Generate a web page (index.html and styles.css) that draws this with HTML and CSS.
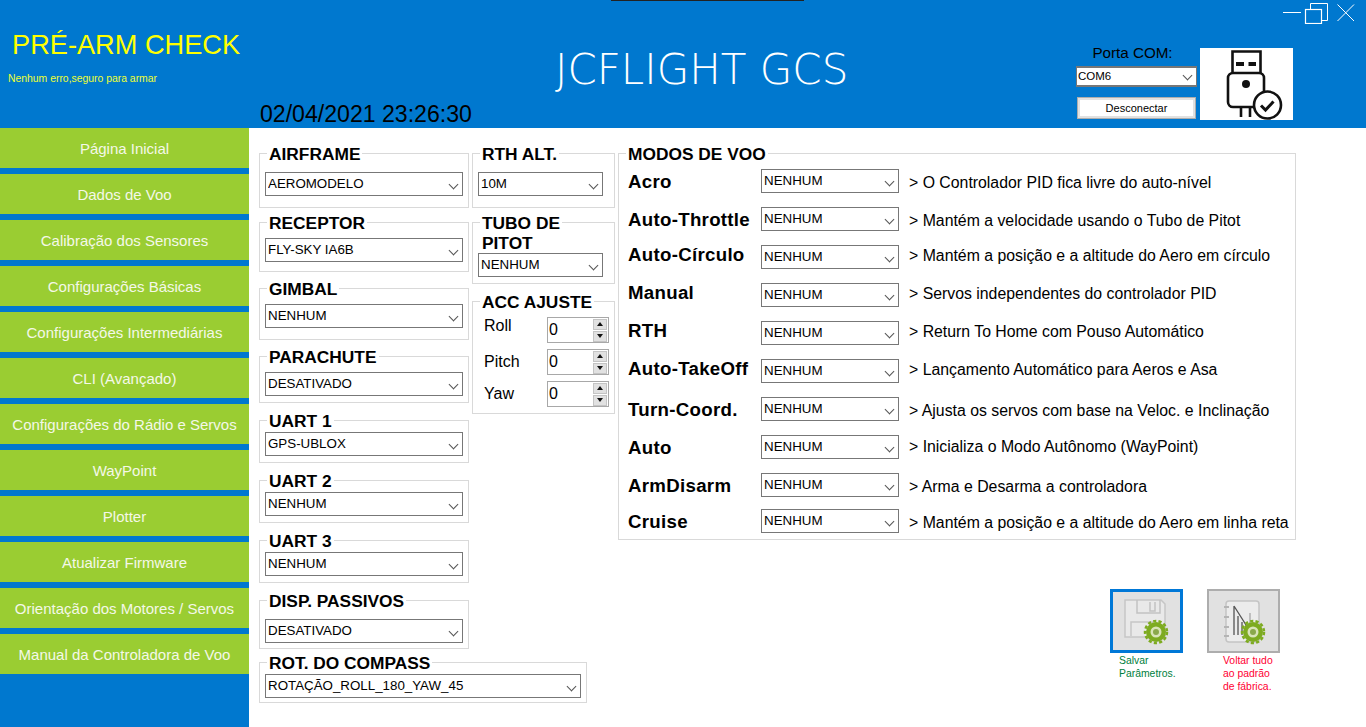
FILE: index.html
```html
<!DOCTYPE html>
<html lang="pt-BR">

<head>
	<meta charset="UTF-8">
	<title>JCFLIGHT GCS</title>
	<link rel="stylesheet" href="styles.css">
</head>

<body>
	<div class="topStrip"></div>
	<header class="header">
		<div class="status">
			<div class="statusTitle">PRÉ-ARM CHECK</div>
			<div class="statusText">Nenhum erro,seguro para armar</div>
		</div>
		<div class="clock">02/04/2021 23:26:30</div>
		<div class="appTitle">JCFLIGHT GCS</div>
		<div class="headerRight">
			<svg class="winControls" width="73" height="24" viewBox="0 0 73 24" fill="none" stroke="#fff" stroke-width="1">
				<path d="M0 12.5H18" />
				<path d="M27.5 9V3.5H44.5V20.5H39" />
				<rect x="22.5" y="9.5" width="16" height="14" stroke-width="1.2" />
				<path d="M54.5 4.5L71 21M71 4.5L54.5 21" />
			</svg>
			<div class="comRow">
				<div class="comControls">
					<div class="comLabel">Porta COM:</div>
					<div class="combo comCombo"><select><option>COM6</option></select></div>
					<button class="connectButton">Desconectar</button>
				</div>
				<div class="usbBox">
					<svg width="93" height="72" viewBox="0 0 93 72" fill="none" stroke="#111" stroke-width="2.6">
						<path d="M32.5 25V3.5H60.5V25" />
						<rect x="28" y="25" width="36" height="34" rx="5" />
						<path d="M36 16H44M48.5 16H56" stroke-width="4" />
						<circle cx="46" cy="36" r="4" fill="#111" stroke="none" />
						<path d="M41 59V69M50 59V69" />
						<circle cx="67.5" cy="57" r="13.5" fill="#fff" />
						<path d="M61 57.5L65.5 62L73.5 53.5" stroke-width="3" />
					</svg>
				</div>
			</div>
		</div>
	</header>

	<div class="page">
		<nav class="sidebar">
			<button class="navButton">Página Inicial</button>
			<button class="navButton">Dados de Voo</button>
			<button class="navButton">Calibração dos Sensores</button>
			<button class="navButton">Configurações Básicas</button>
			<button class="navButton">Configurações Intermediárias</button>
			<button class="navButton">CLI (Avançado)</button>
			<button class="navButton">Configurações do Rádio e Servos</button>
			<button class="navButton">WayPoint</button>
			<button class="navButton">Plotter</button>
			<button class="navButton">Atualizar Firmware</button>
			<button class="navButton">Orientação dos Motores / Servos</button>
			<button class="navButton">Manual da Controladora de Voo</button>
		</nav>

		<main class="content">
			<div class="leftBlock">
				<div class="leftColumns">
					<div class="colLeft">
						<section class="group airframe">
							<div class="groupTitle">AIRFRAME</div>
							<div class="combo"><select><option>AEROMODELO</option></select></div>
						</section>
						<section class="group receptor">
							<div class="groupTitle">RECEPTOR</div>
							<div class="combo"><select><option>FLY-SKY IA6B</option></select></div>
						</section>
						<section class="group gimbal">
							<div class="groupTitle">GIMBAL</div>
							<div class="combo"><select><option>NENHUM</option></select></div>
						</section>
						<section class="group parachute">
							<div class="groupTitle">PARACHUTE</div>
							<div class="combo"><select><option>DESATIVADO</option></select></div>
						</section>
						<section class="group uart">
							<div class="groupTitle">UART 1</div>
							<div class="combo"><select><option>GPS-UBLOX</option></select></div>
						</section>
						<section class="group uart">
							<div class="groupTitle">UART 2</div>
							<div class="combo"><select><option>NENHUM</option></select></div>
						</section>
						<section class="group uart">
							<div class="groupTitle">UART 3</div>
							<div class="combo"><select><option>NENHUM</option></select></div>
						</section>
						<section class="group passive">
							<div class="groupTitle">DISP. PASSIVOS</div>
							<div class="combo"><select><option>DESATIVADO</option></select></div>
						</section>
					</div>
					<div class="colMid">
						<section class="group rthAlt">
							<div class="groupTitle">RTH ALT.</div>
							<div class="combo"><select><option>10M</option></select></div>
						</section>
						<section class="group pitot">
							<div class="groupTitle">TUBO DE<br>PITOT</div>
							<div class="combo"><select><option>NENHUM</option></select></div>
						</section>
						<section class="group acc">
							<div class="groupTitle">ACC AJUSTE</div>
							<div class="accRow rollRow">
								<label>Roll</label>
								<div class="spin"><input type="text" value="0"><div class="spinButtons"><span class="spinUp"></span><span class="spinDown"></span></div></div>
							</div>
							<div class="accRow">
								<label>Pitch</label>
								<div class="spin"><input type="text" value="0"><div class="spinButtons"><span class="spinUp"></span><span class="spinDown"></span></div></div>
							</div>
							<div class="accRow">
								<label>Yaw</label>
								<div class="spin"><input type="text" value="0"><div class="spinButtons"><span class="spinUp"></span><span class="spinDown"></span></div></div>
							</div>
						</section>
					</div>
				</div>
				<section class="group compass">
					<div class="groupTitle">ROT. DO COMPASS</div>
					<div class="combo"><select><option>ROTAÇÃO_ROLL_180_YAW_45</option></select></div>
				</section>
			</div>

			<div class="rightBlock">
				<section class="group modes">
					<div class="groupTitle">MODOS DE VOO</div>
					<div class="modeList">
						<div class="modeRow"><div class="modeName">Acro</div><div class="combo"><select><option>NENHUM</option></select></div><div class="modeDesc">&gt; O Controlador PID fica livre do auto-nível</div></div>
						<div class="modeRow"><div class="modeName">Auto-Throttle</div><div class="combo"><select><option>NENHUM</option></select></div><div class="modeDesc">&gt; Mantém a velocidade usando o Tubo de Pitot</div></div>
						<div class="modeRow raised"><div class="modeName">Auto-Círculo</div><div class="combo"><select><option>NENHUM</option></select></div><div class="modeDesc">&gt; Mantém a posição e a altitude do Aero em círculo</div></div>
						<div class="modeRow raised"><div class="modeName">Manual</div><div class="combo"><select><option>NENHUM</option></select></div><div class="modeDesc">&gt; Servos independentes do controlador PID</div></div>
						<div class="modeRow raised"><div class="modeName">RTH</div><div class="combo"><select><option>NENHUM</option></select></div><div class="modeDesc">&gt; Return To Home com Pouso Automático</div></div>
						<div class="modeRow raised"><div class="modeName">Auto-TakeOff</div><div class="combo"><select><option>NENHUM</option></select></div><div class="modeDesc">&gt; Lançamento Automático para Aeros e Asa</div></div>
						<div class="modeRow"><div class="modeName">Turn-Coord.</div><div class="combo"><select><option>NENHUM</option></select></div><div class="modeDesc">&gt; Ajusta os servos com base na Veloc. e Inclinação</div></div>
						<div class="modeRow highDesc"><div class="modeName">Auto</div><div class="combo"><select><option>NENHUM</option></select></div><div class="modeDesc">&gt; Inicializa o Modo Autônomo (WayPoint)</div></div>
						<div class="modeRow"><div class="modeName">ArmDisarm</div><div class="combo"><select><option>NENHUM</option></select></div><div class="modeDesc">&gt; Arma e Desarma a controladora</div></div>
						<div class="modeRow lastMode"><div class="modeName">Cruise</div><div class="combo"><select><option>NENHUM</option></select></div><div class="modeDesc">&gt; Mantém a posição e a altitude do Aero em linha reta</div></div>
					</div>
				</section>

				<div class="actions">
					<div class="action">
						<button class="actionButton activeAction">
							<svg width="67" height="58" viewBox="0 0 67 58">
								<path d="M12 8H48L52 12V45H12Z" fill="#e9e9e9" stroke="#c6c6c6" stroke-width="1.5" />
								<path d="M24 8V21H47V8M37 10V19H42V10" fill="none" stroke="#c2c2c2" stroke-width="1.5" />
								<path d="M18 44V30H40" fill="none" stroke="#c6c6c6" stroke-width="1.5" />
								<circle cx="43" cy="40" r="11" fill="none" stroke="#7dab20" stroke-width="2.5" stroke-dasharray="3.2 2.2" />
								<circle cx="43" cy="40" r="10" fill="#7dab20" />
								<circle cx="43" cy="40" r="5.5" fill="#d9e4b8" />
								<circle cx="43" cy="40" r="3" fill="#8aa84a" />
							</svg>
						</button>
						<div class="actionText saveText">Salvar<br>Parâmetros.</div>
					</div>
					<div class="action resetAction">
						<button class="actionButton">
							<svg width="69" height="60" viewBox="0 0 69 60">
								<rect x="17" y="10" width="33" height="41" rx="3" fill="#ececec" stroke="#c4c4c4" stroke-width="1.5" />
								<path d="M15 16H20M15 26H20M15 36H20M15 45H20" stroke="#b4b4b4" stroke-width="2" />
								<path d="M25 15L37 34V42M25 15V44M29 25V44M33 31V44" fill="none" stroke="#555" stroke-width="1.3" />
								<path d="M41 22V32" stroke="#b0b0b0" stroke-width="1.5" />
								<circle cx="44" cy="41" r="11" fill="none" stroke="#7dab20" stroke-width="2.5" stroke-dasharray="3.2 2.2" />
								<circle cx="44" cy="41" r="10" fill="#7dab20" />
								<circle cx="44" cy="41" r="5.5" fill="#d9e4b8" />
								<circle cx="44" cy="41" r="3" fill="#8aa84a" />
							</svg>
						</button>
						<div class="actionText resetText">Voltar tudo<br>ao padrão<br>de fábrica.</div>
					</div>
				</div>
			</div>
		</main>
	</div>
</body>

</html>
```

FILE: styles.css
```css
* {
	box-sizing: border-box;
}

html,
body {
	margin: 0;
	height: 727px;
	overflow: hidden;
}

body {
	font-family: "Liberation Sans", Arial, sans-serif;
	color: #000;
	background-color: #fff;
	position: relative;
}

.topStrip {
	position: absolute;
	top: 0;
	left: 611px;
	width: 193px;
	height: 1px;
	background-color: #222;
}

/* header */
.header {
	display: flex;
	height: 128px;
	background-color: #0078CF;
}

.status {
	width: 259px;
	padding: 29px 0 0 12px;
}

.statusTitle {
	font-size: 27.2px;
	line-height: 32px;
	color: #FFFF00;
	white-space: nowrap;
}

.statusText {
	margin: 11px 0 0 -4px;
	font-size: 10.4px;
	line-height: 14px;
	color: #EEFF33;
	white-space: nowrap;
}

.clock {
	width: 296px;
	align-self: flex-end;
	padding: 0 0 0 1px;
	font-size: 23.1px;
	line-height: 28px;
	white-space: nowrap;
}

.appTitle {
	width: 521px;
	padding-top: 46px;
	font-family: "DejaVu Sans", sans-serif;
	font-weight: 200;
	font-size: 42px;
	line-height: 48px;
	color: #fff;
	white-space: nowrap;
}

.headerRight {
	flex: 1;
}

.winControls {
	display: block;
	margin-left: 207px;
}

.comRow {
	display: flex;
	margin-top: 24px;
}

.comControls {
	width: 121px;
}

.comLabel {
	margin-top: -4px;
	height: 22px;
	padding-right: 8px;
	font-size: 15.2px;
	line-height: 18px;
	text-align: center;
}

.combo {
	position: relative;
	height: 24px;
}

.combo select {
	display: block;
	width: 100%;
	height: 100%;
	padding: 0 20px 2px 2px;
	appearance: none;
	border: 1px solid #777;
	border-radius: 0;
	background-color: #fff;
	color: #000;
	font-family: "Liberation Sans", Arial, sans-serif;
	font-size: 13.33px;
}

.combo::after {
	content: "";
	position: absolute;
	top: 9px;
	right: 6px;
	width: 6px;
	height: 6px;
	border-right: 1px solid #555;
	border-bottom: 1px solid #555;
	transform: rotate(45deg);
	pointer-events: none;
}

.comCombo {
	height: 21px;
}

.comCombo select {
	border-width: 2px 1px;
	padding-left: 1px;
	font-size: 11.5px;
}

.comCombo::after {
	top: 6px;
}

.connectButton {
	display: block;
	width: 119px;
	height: 22px;
	margin: 10px 0 0 1px;
	padding: 0;
	border: 1px solid #adadad;
	outline: 2px solid #e1e1e1;
	outline-offset: -3px;
	background-color: #fff;
	font-family: "Liberation Sans", Arial, sans-serif;
	font-size: 11px;
	color: #000;
}

.usbBox {
	width: 93px;
	height: 72px;
	margin-left: 3px;
	background-color: #fff;
}

.usbBox svg {
	display: block;
}

/* sidebar */
.page {
	display: flex;
	height: 599px;
}

.sidebar {
	display: flex;
	flex-direction: column;
	gap: 6px;
	width: 249px;
	background-color: #0078CF;
}

.navButton {
	height: 40px;
	padding: 1px 0 0;
	border: none;
	background-color: #9ACD32;
	color: #F4F8E8;
	font-family: "Liberation Sans", Arial, sans-serif;
	font-size: 15px;
	white-space: nowrap;
}

/* content */
.content {
	display: flex;
	flex: 1;
	gap: 3px;
	padding: 25px 0 0 10px;
}

.leftColumns {
	display: flex;
	gap: 3px;
}

.colLeft {
	width: 210px;
}

.colMid {
	width: 143px;
}

.group {
	border: 1px solid #d9d9d9;
	padding: 0 5px;
}

.groupTitle {
	width: fit-content;
	margin: -10px 0 0 2px;
	padding: 0 2px;
	background-color: #fff;
	font-size: 17.33px;
	font-weight: bold;
	line-height: 20px;
	white-space: nowrap;
}

.airframe {
	padding-bottom: 11px;
}

.airframe .combo,
.passive .combo,
.rthAlt .combo {
	margin-top: 8px;
}

.receptor {
	margin-top: 14px;
	padding-bottom: 9px;
}

.gimbal {
	margin-top: 16px;
	padding-bottom: 11px;
}

.parachute {
	margin-top: 16px;
	padding-bottom: 6px;
}

.receptor .combo,
.gimbal .combo,
.parachute .combo {
	margin-top: 5px;
}

.uart {
	margin-top: 17px;
	padding-bottom: 6px;
}

.uart .combo,
.compass .combo {
	margin-top: 1px;
}

.passive {
	margin-top: 17px;
	padding-bottom: 5px;
}

.compass {
	width: 328px;
	margin-top: 13px;
	padding-bottom: 4px;
}

.colMid .group {
	padding-right: 11px;
}

.rthAlt {
	padding-bottom: 11px;
}

.pitot {
	margin-top: 14px;
	padding-bottom: 6px;
}

.acc {
	margin-top: 17px;
	padding-bottom: 6px;
}

.accRow {
	display: grid;
	grid-template-columns: 69px 62px;
	align-items: center;
	margin-top: 6px;
}

.accRow label {
	padding-left: 6px;
	font-size: 16px;
	line-height: 18px;
}

.rollRow {
	margin-top: 5px;
}

.rollRow label {
	margin-top: -8px;
}

.spin {
	display: flex;
	height: 26px;
	width: 62px;
	margin-right: -6px;
	border: 1px solid #a8a8a8;
	background-color: #fff;
}

.spin input {
	width: 44px;
	height: 24px;
	padding: 0 0 0 1px;
	border: none;
	background: transparent;
	font-family: "Liberation Sans", Arial, sans-serif;
	font-size: 16px;
	color: #000;
}

.spinButtons {
	display: flex;
	flex-direction: column;
	gap: 1px;
	width: 14px;
	margin-left: 1px;
	padding-top: 1px;
}

.spinUp,
.spinDown {
	position: relative;
	height: 11px;
	background-color: #e1e1e1;
	border: 1px solid #c4c4c4;
}

.spinUp::after,
.spinDown::after {
	content: "";
	position: absolute;
	left: 3px;
	top: 2px;
	border-left: 3px solid transparent;
	border-right: 3px solid transparent;
}

.spinUp::after {
	border-bottom: 4px solid #111;
}

.spinDown::after {
	border-top: 4px solid #111;
}

/* flight modes */
.rightBlock {
	width: 678px;
}

.modes {
	padding: 0 0 6px 9px;
}

.modes .groupTitle {
	margin-left: -2px;
}

.modeList {
	display: flex;
	flex-direction: column;
	gap: 14px;
	margin-top: 5px;
}

.modeRow {
	display: grid;
	grid-template-columns: 133px 138px 1fr;
	align-items: center;
}

.lastMode {
	margin-top: -2px;
}

.modeName {
	margin-top: 2px;
	font-size: 18.67px;
	font-weight: bold;
	line-height: 22px;
	letter-spacing: .3px;
	white-space: nowrap;
}

.modeDesc {
	margin-top: 4px;
	padding-left: 10px;
	font-size: 15.84px;
	line-height: 20px;
	white-space: nowrap;
}

.raised .modeName {
	margin-top: -4px;
}

.raised .modeDesc {
	margin-top: -2px;
}

.highDesc .modeDesc {
	margin-top: 0;
}

/* save and restore buttons */
.actions {
	display: flex;
	justify-content: flex-end;
	gap: 24px;
	margin-top: 49px;
	padding-right: 16px;
}

.action {
	width: 73px;
}

.actionButton {
	display: block;
	width: 73px;
	height: 64px;
	padding: 0;
	border: 2px solid #adadad;
	background-color: #e1e1e1;
}

.actionButton svg {
	display: block;
}

.activeAction {
	border: 3px solid #0078D7;
}

.actionText {
	margin-top: 1px;
	font-size: 10.4px;
	line-height: 13px;
	white-space: nowrap;
}

.saveText {
	margin-left: 9px;
	color: #008040;
}

.resetText {
	margin-left: 16px;
	color: #FF0033;
}
```
